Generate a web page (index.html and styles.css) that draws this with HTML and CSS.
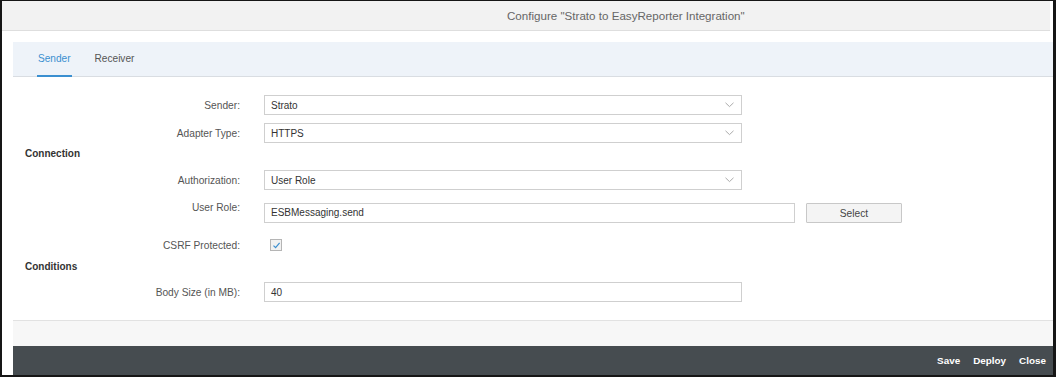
FILE: index.html
```html
<!DOCTYPE html>
<html lang="en">
<head>
    <meta charset="UTF-8">
    <title>Configure Integration</title>
    <link rel="stylesheet" href="styles.css">
</head>
<body>
    <div class="frame">
        <div class="header">
            <span class="title">Configure "Strato to EasyReporter Integration"</span>
        </div>

        <div class="content">
            <div class="tabs">
                <span class="tab active">Sender</span>
                <span class="tab">Receiver</span>
            </div>

            <div class="form">
                <div class="row row-sender">
                    <label class="label">Sender:</label>
                    <div class="select">
                        <span>Strato</span>
                        <svg class="arrow" width="9" height="6" viewBox="0 0 9 6"><path d="M0.5 0.8 L4.5 4.6 L8.5 0.8" fill="none" stroke="#a0a0a0" stroke-width="0.9"/></svg>
                    </div>
                </div>
                <div class="row row-gap8">
                    <label class="label">Adapter Type:</label>
                    <div class="select">
                        <span>HTTPS</span>
                        <svg class="arrow" width="9" height="6" viewBox="0 0 9 6"><path d="M0.5 0.8 L4.5 4.6 L8.5 0.8" fill="none" stroke="#a0a0a0" stroke-width="0.9"/></svg>
                    </div>
                </div>

                <h3 class="section section-connection">Connection</h3>

                <div class="row row-auth">
                    <label class="label">Authorization:</label>
                    <div class="select">
                        <span>User Role</span>
                        <svg class="arrow" width="9" height="6" viewBox="0 0 9 6"><path d="M0.5 0.8 L4.5 4.6 L8.5 0.8" fill="none" stroke="#a0a0a0" stroke-width="0.9"/></svg>
                    </div>
                </div>
                <div class="row row-role">
                    <label class="label label-top">User Role:</label>
                    <div class="input input-wide">ESBMessaging.send</div>
                    <button class="btn">Select</button>
                </div>
                <div class="row row-csrf">
                    <label class="label">CSRF Protected:</label>
                    <span class="checkbox">
                        <svg width="9" height="9" viewBox="0 0 9 9"><path d="M1.5 4.6 L3.6 6.6 L7.6 1.8" fill="none" stroke="#3b8fd0" stroke-width="1.2"/></svg>
                    </span>
                </div>

                <h3 class="section section-conditions">Conditions</h3>

                <div class="row row-body">
                    <label class="label">Body Size (in MB):</label>
                    <div class="input">40</div>
                </div>
            </div>

            <div class="strip"></div>
            <div class="footer">
                <span class="action">Save</span>
                <span class="action">Deploy</span>
                <span class="action">Close</span>
            </div>
        </div>
    </div>
</body>
</html>
```

FILE: styles.css
```css
html, body {
    margin: 0;
    padding: 0;
    background: #111;
}

body {
    font-family: 'Liberation Sans', Arial, sans-serif;
    font-size: 10.2px;
    color: #444;
}

.frame {
    box-sizing: border-box;
    height: 377px;
    border-style: solid;
    border-color: #161616;
    border-width: 1px 3px 2px 2px;
    background: #fff;
    display: flex;
    flex-direction: column;
}

.header {
    height: 29px;
    background: #f2f2f2;
    border-bottom: 1px solid #dedede;
    margin-right: 3px;
    display: flex;
    align-items: center;
    padding-left: 505px;
}

.title {
    font-size: 11.6px;
    color: #666;
}

.content {
    flex: 1;
    display: flex;
    flex-direction: column;
    padding-left: 11px;
}

.tabs {
    margin-top: 11px;
    height: 34px;
    background: #eef3f9;
    border-bottom: 1px solid #d9dde2;
    display: flex;
    align-items: stretch;
    padding-left: 24px;
    gap: 22px;
}

.tab {
    font-size: 10.1px;
    color: #555;
    display: flex;
    align-items: center;
    padding: 0 1px;
    border-bottom: 2px solid transparent;
    margin-bottom: -1px;
}

.tab.active {
    color: #3a8fd0;
    border-bottom-color: #3a8fd0;
}

.form {
    flex: 1;
    display: flex;
    flex-direction: column;
}

.row {
    display: flex;
    align-items: center;
}

.label {
    width: 227px;
    text-align: right;
    padding-right: 24px;
    color: #555;
}

.label-top {
    align-self: flex-start;
    line-height: 11px;
}

.row-sender { margin-top: 18px; }
.row-gap8 { margin-top: 8px; }
.row-auth { margin-top: 6px; }
.row-role { margin-top: 12px; }
.row-csrf { margin-top: 16px; }
.row-body { margin-top: 5px; }

.section {
    margin: 0;
    padding-left: 12px;
    height: 20px;
    line-height: 20px;
    font-size: 10px;
    font-weight: bold;
    color: #333;
}

.section-connection { margin-top: 1px; }
.section-conditions { margin-top: 6px; }

.select, .input {
    box-sizing: border-box;
    width: 478px;
    height: 20px;
    border: 1px solid #cfcfcf;
    background: #fff;
    display: flex;
    align-items: center;
    justify-content: space-between;
    padding: 0 7px 0 6px;
    color: #333;
    font-size: 10px;
}

.arrow {
    display: block;
}

.input-wide {
    width: 531px;
}

.btn {
    box-sizing: border-box;
    margin-left: 11px;
    margin-top: 1px;
    width: 96px;
    height: 20px;
    border: 1px solid #c8c8c8;
    border-radius: 1px;
    background: #f4f4f4;
    font-family: 'Liberation Sans', Arial, sans-serif;
    font-size: 10.2px;
    color: #444;
    padding: 0;
}

.checkbox {
    box-sizing: border-box;
    margin-left: 6px;
    width: 12px;
    height: 12px;
    border: 1px solid #b5b5b5;
    background: #f1f1f1;
    display: flex;
    align-items: center;
    justify-content: center;
}

.strip {
    height: 25px;
    background: #f7f7f7;
    border-top: 1px solid #e2e2e2;
}

.footer {
    height: 29px;
    background: #464c50;
    display: flex;
    justify-content: flex-end;
    align-items: center;
    padding-right: 7px;
    gap: 13px;
}

.action {
    color: #fff;
    font-weight: bold;
    font-size: 9.9px;
}
```
